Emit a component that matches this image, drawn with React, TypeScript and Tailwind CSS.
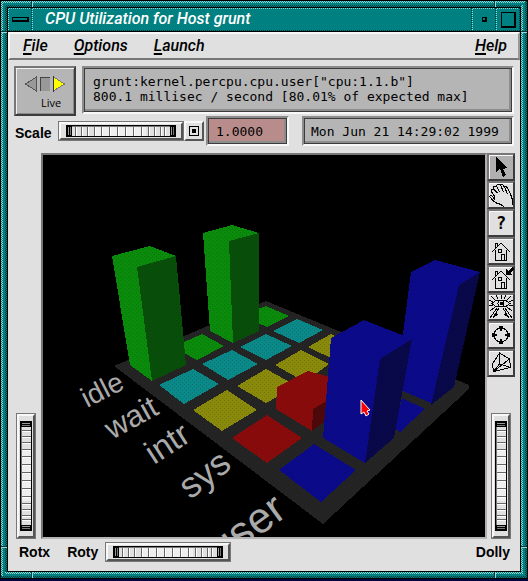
import React from "react";

const lightDither = "bg-[repeating-conic-gradient(#9ad6d6_0_25%,#008080_0_50%)] bg-[length:2px_2px]";
const darkDither = "bg-[repeating-conic-gradient(#003c3c_0_25%,#008080_0_50%)] bg-[length:2px_2px]";
const raised = "border-2 border-t-[#f8f8f8] border-l-[#f8f8f8] border-b-[#555555] border-r-[#555555]";
const sunken =
  "border-2 border-t-[#8c8c8c] border-l-[#8c8c8c] border-b-[#f8f8f8] border-r-[#f8f8f8] shadow-[inset_0_0_0_1px_#3c3c3c,inset_-3px_-3px_0_#8c8c8c]";
const mono = "font-['DejaVu_Sans_Mono',monospace] text-[13px] leading-[15px]";

function Frame({ children }: { children: React.ReactNode }) {
  return (
    <div className="relative flex grow flex-col bg-black p-px">
      <div className={`flex grow flex-col pr-[2px] pb-[2px] ${darkDither}`}>
        <div className={`flex grow flex-col pt-[2px] pl-[2px] ${lightDither}`}>
          <div className="flex grow flex-col bg-[#008080] p-[2px]">
            <div className={`flex grow flex-col pr-[2px] pb-[2px] ${lightDither}`}>
              <div className={`flex grow flex-col pt-[2px] pl-[2px] ${darkDither}`}>
                <div className="flex grow flex-col bg-black p-px">{children}</div>
              </div>
            </div>
          </div>
        </div>
      </div>
      <i className="absolute top-px left-[31px] h-[6px] w-[2px] border-l border-[#003c3c] bg-[#9ad6d6]" />
      <i className="absolute top-px right-[32px] h-[6px] w-[2px] border-l border-[#003c3c] bg-[#9ad6d6]" />
      <i className="absolute bottom-px left-[31px] h-[6px] w-[2px] border-l border-[#003c3c] bg-[#9ad6d6]" />
      <i className="absolute right-[32px] bottom-px h-[6px] w-[2px] border-l border-[#003c3c] bg-[#9ad6d6]" />
      <i className="absolute top-[31px] left-px h-[2px] w-[6px] border-t border-[#003c3c] bg-[#9ad6d6]" />
      <i className="absolute top-[31px] right-px h-[2px] w-[6px] border-t border-[#003c3c] bg-[#9ad6d6]" />
      <i className="absolute bottom-[31px] left-px h-[2px] w-[6px] border-t border-[#003c3c] bg-[#9ad6d6]" />
      <i className="absolute right-px bottom-[31px] h-[2px] w-[6px] border-t border-[#003c3c] bg-[#9ad6d6]" />
    </div>
  );
}

function TitleCell({ grow, children }: { grow?: boolean; children: React.ReactNode }) {
  return (
    <div className={`flex pr-px pb-px ${darkDither} ${grow ? "grow" : "w-6"}`}>
      <div className={`flex grow pt-px pl-px ${lightDither}`}>
        <div className="flex grow items-center bg-[#008080]">{children}</div>
      </div>
    </div>
  );
}

const RIDGES = [9, 15, 21, 28, 35, 43, 51, 59, 67, 75, 82, 88, 94, 98];

function Wheel({ id, label, vertical }: { id: string; label: string; vertical?: boolean }) {
  const bar = (at: number, size: number, from: number, len: number, fill: string) =>
    vertical ? (
      <rect x={from} y={at} width={len} height={size} fill={fill} />
    ) : (
      <rect x={at} y={from} width={size} height={len} fill={fill} />
    );
  return (
    <div className={`relative shrink-0 border border-[#777777] ${vertical ? "h-[126px] w-5" : "h-5 w-[126px]"}`}>
      <div className={`flex h-full w-full items-center justify-center bg-[#e0e0e0] ${raised}`}>
        <svg
          className="shrink-0"
          width={vertical ? 12 : 110}
          height={vertical ? 110 : 12}
          shapeRendering="crispEdges"
          aria-hidden="true"
        >
          {bar(0, 110, 0, 12, "#000000")}
          {bar(6, 98, 1, 10, "#e0e0e0")}
          {bar(30, 50, 1, 10, "#eeeeee")}
          {bar(6, 98, 1, 1, "#777777")}
          {bar(2, 1, 2, 8, "#999999")}
          {bar(4, 1, 2, 8, "#777777")}
          {bar(105, 1, 2, 8, "#999999")}
          {bar(107, 1, 2, 8, "#777777")}
          {RIDGES.map((r) => (
            <React.Fragment key={r}>
              {bar(r, 1, 2, 9, "#666666")}
              {bar(r + 1, 1, 2, 9, "#ffffff")}
            </React.Fragment>
          ))}
        </svg>
      </div>
      <input
        id={id}
        type="range"
        aria-label={label}
        className="absolute inset-0 h-full w-full cursor-pointer opacity-0"
      />
    </div>
  );
}

const house = (
  <path
    d="M4 14 L13 5 L22 14 M7.500 12 V22.500 H18.500 V12 M7.500 10 V5.500 H9.500 V8 M13.500 22 V16.500 H16.500 V22 M10.500 11.500 H13.500 V14.500 H10.500 Z"
    fill="none"
  />
);

const TOOLS: { name: string; icon: React.ReactNode }[] = [
  {
    name: "Pick",
    icon: <path d="M8 3 V18 L12 15 L15 23 L18 21 L15 15 L19 14 Z" fill="#000" stroke="none" />,
  },
  {
    name: "Pan",
    icon: (
      <path
        d="M24.500 23 V18 L22.500 12 L20 7 L18 4 L16.500 5 L19.500 12 M16.500 5 L14.500 2.500 L12.500 3 L15.500 10 M12.500 3 L10 2 L8.500 4 L11.500 10 M8.500 4 L6 4.500 L5.500 7 L9.500 11 M5.500 7 L3.500 8 L3.500 10 L6.500 14 L6.500 17 L3 13 L1.500 14.500 L5.500 19 L8.500 21 L13 22.500 L16 25"
        fill="none"
      />
    ),
  },
  {
    name: "Help",
    icon: (
      <text x="13" y="19" textAnchor="middle" stroke="none" className="font-['DejaVu_Sans_Mono',monospace] text-[17px] font-bold">
        ?
      </text>
    ),
  },
  { name: "Home", icon: house },
  {
    name: "Set home",
    icon: (
      <>
        {house}
        <path d="M18 3 V9 H24 L22 7 L26 3 L24 1 L20 5 Z" fill="#000" stroke="none" />
      </>
    ),
  },
  {
    name: "View all",
    icon: (
      <>
        <path d="M4 9.500 L8 6.500 H18 L22 9.500 L18 12.500 H8 Z" fill="none" />
        <circle cx="13" cy="9.500" r="3" fill="none" />
        <rect x="12" y="8" width="3" height="3" fill="#000" stroke="none" />
        <path
          d="M13 1 V5 M8 1 L10 5 M18 1 L16 5 M3 2 L7 6 M23 2 L19 6 M1 6 L5 8 M25 6 L21 8 M1 12 L5 11 M25 12 L21 11 M2 17 L7 13 M24 17 L19 13 M9 14 L2 24 M11 14 L5 24 M17 14 L24 24 M15 14 L21 24"
          fill="none"
        />
        <path d="M6 23 L8 18 L10 21 Z M20 23 L18 18 L16 21 Z" fill="#000" stroke="none" />
      </>
    ),
  },
  {
    name: "Seek",
    icon: (
      <>
        <circle cx="13" cy="13" r="7" fill="none" />
        <path
          d="M11 4 H15 V7 H14 V9 H12 V7 H11 Z M11 22 H15 V19 H14 V17 H12 V19 H11 Z M4 11 V15 H7 V14 H9 V12 H7 V11 Z M22 11 V15 H19 V14 H17 V12 H19 V11 Z"
          fill="#000"
          stroke="none"
        />
      </>
    ),
  },
  {
    name: "Projection",
    icon: (
      <path
        d="M11.500 3 L4.500 14 L5.500 21.500 L22.500 17.500 L21.500 9 Z M11.500 3 V14 M5.500 21.500 L11.500 14 L22.500 17.500 M5.500 21.500 L21.500 9"
        fill="none"
      />
    ),
  },
];

const GREEN = "#0b8b0b";
const CYAN = "#0b8989";
const YELLOW = "#89890b";
const RED = "#890b0b";
const BLUE = "#0a0a8a";

const FACES: [string, string][] = [
  ["#242424", "114,366 266,301 469,385 469,389 323,524"],
  [GREEN, "258,309 266,306 289,316 267,327 258,323"],
  [GREEN, "184,342 202,334 224,346 197,360 184,353"],
  [CYAN, "193,369 219,384 184,404 159,385"],
  [CYAN, "232,350 258,364 228,380 202,364"],
  [CYAN, "266,334 292,346 266,360 240,347"],
  [CYAN, "297,319 323,330 299,343 273,331"],
  [YELLOW, "227,390 257,410 222,431 193,410"],
  [YELLOW, "266,369 297,386 266,403 237,386"],
  [YELLOW, "301,350 329,364 305,382 275,365"],
  [YELLOW, "331,334 358,346 335,360 308,347"],
  [RED, "267,415 302,438 267,463 232,438"],
  [BLUE, "314,444 356,470 321,502 279,470"],
  [BLUE, "402,398 425,409 400,432 394,428"],
  [GREEN, "112,256 150,246 176,256 186,365 152,381 130,365"],
  ["#084f0a", "137,267 176,256 186,365 152,381"],
  [GREEN, "203,233 232,225 259,233 259,331 233,343 210,331"],
  ["#084f0a", "229,241 259,233 259,331 233,343"],
  [RED, "308,371 277,387 276,409 312,431 313,409 330,400 330,377"],
  ["#4d0909", "313,409 330,399 330,418 312,431"],
  [BLUE, "435,260 411,272 396,388 431,403 453,387 480,272"],
  ["#08084b", "459,285 480,272 454,387 431,405"],
  [BLUE, "364,320 331,338 323,438 365,463 394,438 412,339"],
  ["#08084b", "380,359 412,339 394,438 365,463"],
];

const LABELS: { text: string; x: number; y: number; angle: number; size: string }[] = [
  { text: "idle", x: 87, y: 408, angle: -27, size: "text-[28px]" },
  { text: "wait", x: 112, y: 440, angle: -29, size: "text-[31px]" },
  { text: "intr", x: 154, y: 465, angle: -33, size: "text-[33px]" },
  { text: "sys", x: 190, y: 500, angle: -37, size: "text-[36px]" },
  { text: "user", x: 221, y: 564, angle: -36, size: "text-[43px]" },
];

function Scene() {
  return (
    <svg viewBox="43 155 442 382" className="block min-w-0 flex-1 bg-black" role="img" aria-label="CPU utilization bars">
      <defs>
        <pattern id="dots" width="4" height="4" patternUnits="userSpaceOnUse">
          <path d="M0 0h1v1H0zM2 2h1v1H2z" fill="#000000" fillOpacity="0.14" />
        </pattern>
      </defs>
      <g shapeRendering="crispEdges">
        {FACES.map(([fill, points], i) => (
          <g key={i}>
            <polygon points={points} fill={fill} />
            <polygon points={points} fill="url(#dots)" />
          </g>
        ))}
      </g>
      {LABELS.map((l) => (
        <text
          key={l.text}
          transform={`translate(${l.x} ${l.y}) rotate(${l.angle})`}
          fill="#aaaaaa"
          className={`font-['Liberation_Sans',sans-serif] ${l.size}`}
        >
          {l.text}
        </text>
      ))}
      <path
        d="M361 400 V414 L364 412 L366 416 L369 414 L367 411 L370 410 Z"
        fill="#ff0000"
        stroke="#ffffff"
        strokeWidth="1"
      />
    </svg>
  );
}

function MenuItem({ label }: { label: string }) {
  return (
    <button type="button" className="font-['Roboto',sans-serif] text-[16px] leading-5 font-medium italic">
      <span className="underline decoration-2 underline-offset-2">{label[0]}</span>
      {label.slice(1)}
    </button>
  );
}

export default function App() {
  return (
    <div className="flex min-h-screen flex-col bg-[#00003a] pb-[2px] font-['Liberation_Sans',Arial,sans-serif] text-black">
      <Frame>
        <header className="mb-px flex h-[23px]">
          <TitleCell>
            <button type="button" aria-label="Window menu" className="mx-auto h-[5px] w-[17px] border border-r-2 border-b-2 border-black" />
          </TitleCell>
          <TitleCell grow>
            <h1 className="pb-[2px] pl-3 font-['Roboto',sans-serif] text-[16px] leading-[19px] font-medium text-white italic">
              CPU Utilization for Host grunt
            </h1>
          </TitleCell>
          <TitleCell>
            <button type="button" aria-label="Minimize" className="mx-auto size-[5px] border border-r-2 border-b-2 border-black" />
          </TitleCell>
          <TitleCell>
            <button type="button" aria-label="Maximize" className="mx-auto h-4 w-[15px] border border-r-2 border-b-2 border-black" />
          </TitleCell>
        </header>

        <main className="flex grow flex-col bg-[#e0e0e0]">
          <nav className="flex h-7 items-center gap-[26px] border-2 border-t-[#f8f8f8] border-r-[#999999] border-b-[#777777] border-l-[#f8f8f8] pr-[11px] pl-[13px]">
            <MenuItem label="File" />
            <MenuItem label="Options" />
            <MenuItem label="Launch" />
            <div className="ml-auto flex">
              <MenuItem label="Help" />
            </div>
          </nav>

          <section className="mt-[6px] flex gap-[6px] pr-[6px] pl-[6px]">
            <button
              type="button"
              className="flex h-[50px] w-[62px] shrink-0 flex-col items-center border-2 border-t-[#777777] border-r-[#3c3c3c] border-b-[#3c3c3c] border-l-[#777777] bg-[#b5b5b5] pt-[7px] shadow-[inset_1px_1px_0_#f0f0f0,inset_-1px_-1px_0_#888888]"
            >
              <svg width="40" height="18" shapeRendering="crispEdges" aria-hidden="true">
                <path d="M11.500 2 L0.500 9 L11.500 16 Z" fill="#999999" stroke="#555555" />
                <path d="M15.500 16 V2.500 H25" fill="none" stroke="#444444" />
                <path d="M16 3 H25 V16 H16 Z" fill="#999999" />
                <path d="M28.500 2 L39.500 9 L28.500 16 Z" fill="#ffff00" stroke="#777777" />
                <path d="M28.500 1 V17" stroke="#333333" />
              </svg>
              <span className="pl-3 font-['Open_Sans',sans-serif] text-[11px] leading-5">Live</span>
            </button>
            <div className={`h-12 min-w-0 flex-1 overflow-hidden bg-[#b5b5b5] pt-[6px] pl-[9px] whitespace-pre ${mono} ${sunken}`}>
              {'grunt:kernel.percpu.cpu.user["cpu:1.1.b"]\n800.1 millisec / second [80.01% of expected max]'}
            </div>
          </section>

          <section className="flex h-[30px] items-center pr-[6px] pl-[7px]">
            <label htmlFor="scale-wheel" className="mr-[6px] w-[37px] pt-1 text-[14px] leading-5 font-bold">
              Scale
            </label>
            <Wheel id="scale-wheel" label="Scale wheel" />
            <button
              type="button"
              aria-label="Reset scale"
              className={`flex size-5 shrink-0 items-center justify-center bg-[#e0e0e0] ${raised}`}
            >
              <span className="flex size-[10px] items-center justify-center border border-black">
                <span className="size-1 bg-black" />
              </span>
            </button>
            <input
              aria-label="Scale value"
              defaultValue="1.0000"
              className={`ml-[2px] h-[30px] w-[83px] shrink-0 rounded-none bg-[#b98c8c] pl-2 outline-none ${mono} ${sunken}`}
            />
            <time className={`ml-auto h-[30px] w-[212px] pt-[6px] pl-[7px] whitespace-pre ${mono} bg-[#b5b5b5] ${sunken}`}>
              Mon Jun 21 14:29:02 1999
            </time>
          </section>

          <section className="mt-[7px] flex grow">
            <div className="flex w-[33px] shrink-0 items-end justify-center">
              <div className="pl-[3px]">
                <Wheel id="rotx" label="Rotx" vertical />
              </div>
            </div>
            <div className="flex min-w-0 flex-1 border-2 border-t-[#777777] border-r-[#b5adad] border-b-[#b5b5b5] border-l-[#777777]">
              <Scene />
            </div>
            <div className="flex w-[33px] shrink-0 flex-col justify-between">
              <div className="flex w-[28px] flex-col">
                {TOOLS.map((t, i) => (
                  <button
                    key={t.name}
                    type="button"
                    aria-label={t.name}
                    className={`flex h-7 w-7 items-center justify-center border-2 border-t-[#777777] border-r-[#3c3c3c] border-b-[#3c3c3c] border-l-[#777777] shadow-[inset_1px_1px_0_#f8f8f8] ${i === 0 ? "bg-[#b0b0b0]" : "bg-[#e0e0e0]"}`}
                  >
                    <svg
                      width="26"
                      height="26"
                      viewBox="0 0 26 26"
                      stroke="#000"
                      strokeWidth="1"
                      shapeRendering="crispEdges"
                      className="shrink-0"
                      aria-hidden="true"
                    >
                      {t.icon}
                    </svg>
                  </button>
                ))}
              </div>
              <div className="pl-1">
                <Wheel id="dolly" label="Dolly" vertical />
              </div>
            </div>
          </section>

          <footer className="flex h-8 items-start pt-[3px] pr-[10px] pl-[11px] text-[14px] leading-5 font-bold">
            <label htmlFor="rotx">Rotx</label>
            <label htmlFor="roty" className="mr-[7px] ml-[17px]">
              Roty
            </label>
            <Wheel id="roty" label="Roty" />
            <label htmlFor="dolly" className="ml-auto">
              Dolly
            </label>
          </footer>
        </main>
      </Frame>
    </div>
  );
}
